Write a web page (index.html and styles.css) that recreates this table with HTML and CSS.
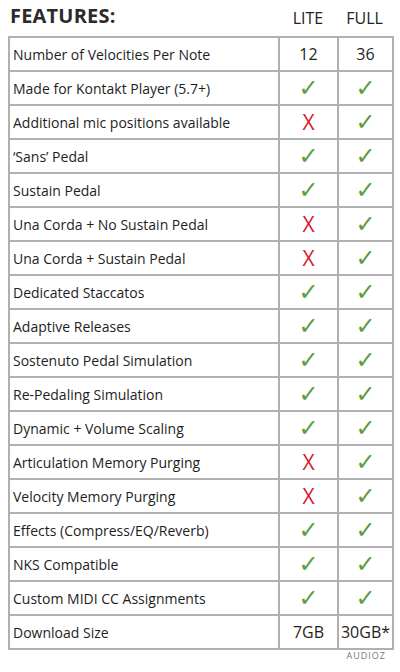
FILE: index.html
```html
<!DOCTYPE html>
<html>
<head>
<meta charset="utf-8">
<link rel="stylesheet" href="styles.css">
</head>
<body>
<div class="page">
  <div class="head">
    <div class="title">FEATURES:</div>
    <div class="col-h lite">LITE</div>
    <div class="col-h full">FULL</div>
  </div>
  <table class="tbl">
    <colgroup><col class="c1"><col class="c2"><col class="c3"></colgroup>
    <tbody>
      <tr><td>Number of Velocities Per Note</td><td class="num">12</td><td class="num">36</td></tr>
      <tr><td>Made for Kontakt Player (5.7+)</td><td class="y">✓</td><td class="y">✓</td></tr>
      <tr><td>Additional mic positions available</td><td class="n">X</td><td class="y">✓</td></tr>
      <tr><td>‘Sans’ Pedal</td><td class="y">✓</td><td class="y">✓</td></tr>
      <tr><td>Sustain Pedal</td><td class="y">✓</td><td class="y">✓</td></tr>
      <tr><td>Una Corda + No Sustain Pedal</td><td class="n">X</td><td class="y">✓</td></tr>
      <tr><td>Una Corda + Sustain Pedal</td><td class="n">X</td><td class="y">✓</td></tr>
      <tr><td>Dedicated Staccatos</td><td class="y">✓</td><td class="y">✓</td></tr>
      <tr><td>Adaptive Releases</td><td class="y">✓</td><td class="y">✓</td></tr>
      <tr><td>Sostenuto Pedal Simulation</td><td class="y">✓</td><td class="y">✓</td></tr>
      <tr><td>Re-Pedaling Simulation</td><td class="y">✓</td><td class="y">✓</td></tr>
      <tr><td>Dynamic + Volume Scaling</td><td class="y">✓</td><td class="y">✓</td></tr>
      <tr><td>Articulation Memory Purging</td><td class="n">X</td><td class="y">✓</td></tr>
      <tr><td>Velocity Memory Purging</td><td class="n">X</td><td class="y">✓</td></tr>
      <tr><td>Effects (Compress/EQ/Reverb)</td><td class="y">✓</td><td class="y">✓</td></tr>
      <tr><td>NKS Compatible</td><td class="y">✓</td><td class="y">✓</td></tr>
      <tr><td>Custom MIDI CC Assignments</td><td class="y">✓</td><td class="y">✓</td></tr>
      <tr><td>Download Size</td><td class="num size">7GB</td><td class="num size">30GB*</td></tr>
    </tbody>
  </table>
  <div class="wm-row"><span class="wm">AUDIOZ</span></div>
</div>
</body>
</html>
```
FILE: styles.css
```css
html, body {
  margin: 0;
  padding: 0;
  background: #ffffff;
}
.page {
  width: 400px;
  height: 672px;
  padding: 0 8px;
  box-sizing: border-box;
  font-family: "Open Sans", "Lato", sans-serif;
  color: #1e1e1e;
}
.head {
  display: flex;
  align-items: flex-end;
  height: 36px;
  box-sizing: border-box;
  padding-bottom: 8px;
}
.title {
  width: 270px;
  padding-left: 2px;
  font-weight: 700;
  font-size: 20px;
  letter-spacing: 0.2px;
  color: #2b2b2b;
  line-height: 24px;
}
.col-h {
  text-align: center;
  font-size: 16px;
  line-height: 20px;
  color: #222;
}
.lite { width: 59px; }
.full { width: 55px; }
.tbl {
  width: 384px;
  border-collapse: collapse;
  table-layout: fixed;
}
.c1 { width: 270px; }
.c2 { width: 59px; }
.c3 { width: 55px; }
.tbl td {
  border: 2px solid #b0b0b0;
  height: 34px;
  padding: 0;
  box-sizing: border-box;
  font-size: 14px;
  padding-left: 3px;
  white-space: nowrap;
  color: #1e1e1e;
}
.tbl td.num, .tbl td.y, .tbl td.n {
  text-align: center;
  padding-left: 0;
}
.tbl td.num {
  font-size: 16px;
}
.tbl td.y {
  color: #5c9e3c;
  font-family: "DejaVu Sans", sans-serif;
  font-size: 24px;
  line-height: 1;
}
.tbl td.n {
  color: #d4212a;
  font-size: 21px;
  line-height: 1;
  font-family: "Open Sans", sans-serif;
}
.wm-row {
  display: flex;
  justify-content: flex-end;
  padding-right: 6px;
}
.wm {
  font-size: 9px;
  letter-spacing: 1px;
  color: #777;
  line-height: 12px;
}
```
